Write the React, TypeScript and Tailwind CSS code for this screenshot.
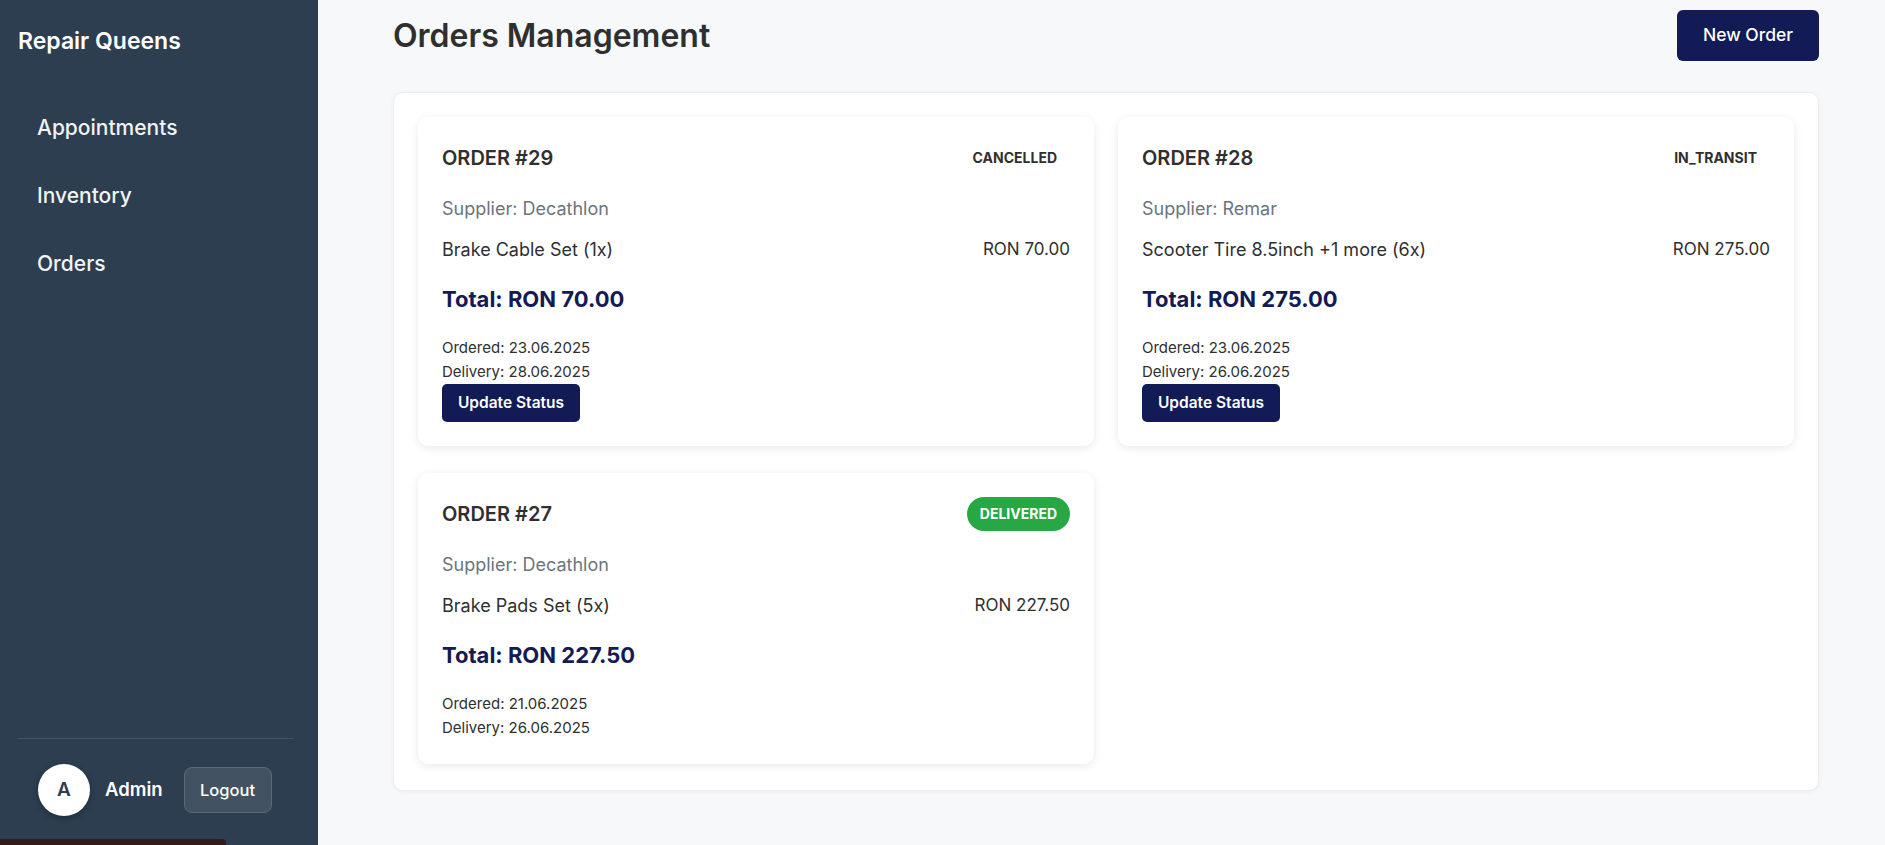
import React from "react";

type Order = {
  id: number;
  status: string;
  supplier: string;
  item: string;
  price: string;
  total: string;
  ordered: string;
  delivery: string;
  canUpdate: boolean;
};

const orders: Order[] = [
  {
    id: 29,
    status: "CANCELLED",
    supplier: "Decathlon",
    item: "Brake Cable Set (1x)",
    price: "RON 70.00",
    total: "RON 70.00",
    ordered: "23.06.2025",
    delivery: "28.06.2025",
    canUpdate: true,
  },
  {
    id: 28,
    status: "IN_TRANSIT",
    supplier: "Remar",
    item: "Scooter Tire 8.5inch +1 more (6x)",
    price: "RON 275.00",
    total: "RON 275.00",
    ordered: "23.06.2025",
    delivery: "26.06.2025",
    canUpdate: true,
  },
  {
    id: 27,
    status: "DELIVERED",
    supplier: "Decathlon",
    item: "Brake Pads Set (5x)",
    price: "RON 227.50",
    total: "RON 227.50",
    ordered: "21.06.2025",
    delivery: "26.06.2025",
    canUpdate: false,
  },
];

function StatusBadge({ status }: { status: string }) {
  const delivered = status === "DELIVERED";
  return (
    <span
      className={
        delivered
          ? "rounded-full bg-[#28a745] px-[13px] py-[7px] text-[14px] font-bold leading-[20px] text-white"
          : "rounded-full px-[13px] py-[7px] text-[14px] font-bold leading-[20px] text-[#2f2f2f]"
      }
    >
      {status}
    </span>
  );
}

function OrderCard({ o }: { o: Order }) {
  return (
    <div className="rounded-[10px] bg-white p-6 shadow-[0_2px_10px_rgba(0,0,0,0.09)]">
      <div className="flex h-[34px] items-center justify-between">
        <h3 className="text-[20px] font-semibold leading-[28px] text-[#2f2f2f]">ORDER #{o.id}</h3>
        <StatusBadge status={o.status} />
      </div>
      <p className="mt-5 text-[18px] leading-[27px] text-[#6c757d]">Supplier: {o.supplier}</p>
      <div className="mt-[14px] flex items-center justify-between text-[#2f2f2f]">
        <span className="text-[18px] leading-[27px]">{o.item}</span>
        <span className="text-[17px] leading-[27px]">{o.price}</span>
      </div>
      <p className="mt-5 text-[22px] font-bold leading-[33px] text-[#131a55]">Total: {o.total}</p>
      <div className="mt-5 text-[15px] leading-6 text-[#2f2f2f]">
        <p>Ordered: {o.ordered}</p>
        <p>Delivery: {o.delivery}</p>
      </div>
      {o.canUpdate && (
        <button className="h-[38px] w-[138px] rounded-[5px] bg-[#121b55] text-[15.5px] font-semibold text-white">
          Update Status
        </button>
      )}
    </div>
  );
}

export default function App() {
  return (
    <div className="relative flex h-[845px] w-full overflow-hidden font-[Inter,sans-serif]">
      <aside className="flex w-[318px] shrink-0 flex-col bg-[#2c3e50]">
        <div className="pl-[18px] pt-[25px] text-[23px] font-semibold leading-[32px] text-white">
          Repair Queens
        </div>
        <nav className="mt-[37px] flex flex-col pl-[18px]">
          {["Appointments", "Inventory", "Orders"].map((n) => (
            <a
              key={n}
              className="block py-[20px] pl-[19px] text-[21px] font-medium leading-[28px] text-[#f1f3f5]"
            >
              {n}
            </a>
          ))}
        </nav>
        <div className="flex-1" />
        <div className="ml-[18px] mr-[25px] border-t border-[#43536a]" />
        <div className="flex items-center pb-[29px] pl-[38px] pt-[25px]">
          <div className="flex h-[52px] w-[52px] items-center justify-center rounded-full bg-white text-[19px] font-semibold text-[#2c3e50] shadow-[0_2px_6px_rgba(0,0,0,0.3)]">
            A
          </div>
          <span className="ml-[15px] text-[18.5px] font-semibold text-white">Admin</span>
          <button className="ml-[21px] h-[46px] w-[88px] rounded-[8px] border border-[#5c6878] bg-[#435263] text-[16.5px] font-medium text-white">
            Logout
          </button>
        </div>
      </aside>

      <main className="flex-1 bg-[#f7f8fa] pl-[75px] pr-[66px]">
        <div className="flex items-center justify-between pt-[10px]">
          <h1 className="text-[32px] font-semibold leading-[40px] text-[#2f2f2f]">Orders Management</h1>
          <button className="h-[51px] w-[142px] rounded-[6px] bg-[#121b55] text-[17.5px] font-medium text-white">
            New Order
          </button>
        </div>
        <div className="mt-[31px] rounded-[10px] border border-[#eceef1] bg-white px-6 pb-[26px] pt-6 shadow-[0_1px_4px_rgba(0,0,0,0.05)]">
          <div className="grid grid-cols-2 gap-x-6 gap-y-[27px]">
            {orders.map((o) => (
              <OrderCard key={o.id} o={o} />
            ))}
          </div>
        </div>
      </main>

      <div className="absolute bottom-0 left-0 h-[6px] w-[226px] rounded-tr-[4px] bg-[#321a1f]" />
    </div>
  );
}
